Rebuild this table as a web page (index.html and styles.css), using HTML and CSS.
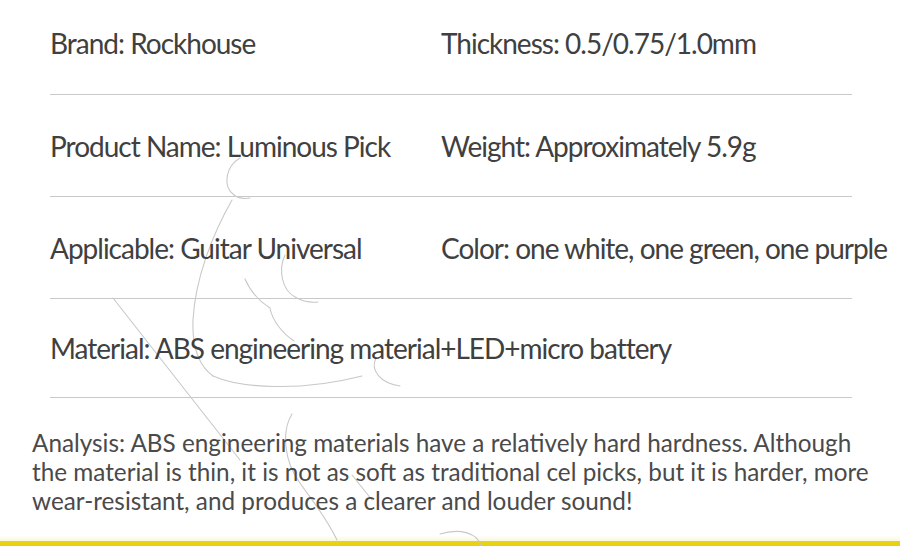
FILE: index.html
```html
<!DOCTYPE html>
<html lang="en">
<head>
<meta charset="utf-8">
<title>Luminous Pick</title>
<link rel="stylesheet" href="styles.css">
</head>
<body>
<div class="page">
  <svg class="sketch" width="900" height="546" viewBox="0 0 900 546" aria-hidden="true">
    <g fill="none" stroke="#c8c8c8" stroke-width="1.1" stroke-linecap="round">
      <path d="M240 158 C226 166 222 186 234 195 C238 198 244 199 250 198"/>
      <path d="M232 200 C212 235 195 280 193 320 C192 345 198 365 213 376"/>
      <path d="M213 376 C240 388 300 392 362 376"/>
      <path d="M113 298 L240 460"/>
      <path d="M245 279 C252 295 262 303 270 308 C272 320 282 333 294 341"/>
      <path d="M285 255 C278 270 282 290 295 297 C302 301 310 303 318 302"/>
      <path d="M376 358 C370 370 380 383 400 386"/>
      <path d="M292 414 C282 430 283 460 300 483 C310 498 325 515 337 540"/>
      <path d="M352 475 L372 500"/>
      <path d="M440 534 C460 528 478 533 481 546"/>
    </g>
  </svg>

  <section class="specs">
    <div class="row">
      <div class="cell">Brand: Rockhouse</div>
      <div class="cell">Thickness: 0.5/0.75/1.0mm</div>
    </div>
    <div class="row">
      <div class="cell">Product Name: Luminous Pick</div>
      <div class="cell">Weight: Approximately 5.9g</div>
    </div>
    <div class="row">
      <div class="cell">Applicable: Guitar Universal</div>
      <div class="cell">Color: one white, one green, one purple</div>
    </div>
    <div class="row">
      <div class="cell wide">Material: ABS engineering material+LED+micro battery</div>
    </div>
  </section>

  <p class="analysis">Analysis: ABS engineering materials have a relatively hard hardness. Although the material is thin, it is not as soft as traditional cel picks, but it is harder, more wear-resistant, and produces a clearer and louder sound!</p>

  <div class="glow"></div>
  <div class="bar"></div>
</div>
</body>
</html>
```

FILE: styles.css
```css
html, body {
  margin: 0;
  padding: 0;
  background: #ffffff;
}

.page {
  position: relative;
  width: 900px;
  height: 546px;
  overflow: hidden;
  display: flex;
  flex-direction: column;
  font-family: Lato, "Open Sans", "Liberation Sans", sans-serif;
  color: #404040;
}

.sketch {
  position: absolute;
  left: 0;
  top: 0;
  z-index: 0;
}

.specs {
  position: relative;
  z-index: 1;
  margin-left: 50px;
  width: 802px;
}

.row {
  display: grid;
  grid-template-columns: 391px 1fr;
  align-items: center;
  height: 101px;
  border-bottom: 1px solid #c9c9c9;
}

.row:first-child {
  height: 86px;
  padding-bottom: 8px;
}

.row:last-child {
  height: 98px;
}

.cell {
  font-size: 28px;
  letter-spacing: -1px;
  white-space: nowrap;
  line-height: 34px;
}

.cell.wide {
  grid-column: 1 / span 2;
}

.analysis {
  position: relative;
  z-index: 1;
  margin: 30px 0 0 32px;
  width: 840px;
  font-size: 24.3px;
  line-height: 29px;
  letter-spacing: 0;
  color: #4a4a4a;
}

.glow {
  margin-top: auto;
  height: 6px;
  background: linear-gradient(#ffffff, #fbf8de);
}

.bar {
  height: 5px;
  background: #e8d214;
}
```
